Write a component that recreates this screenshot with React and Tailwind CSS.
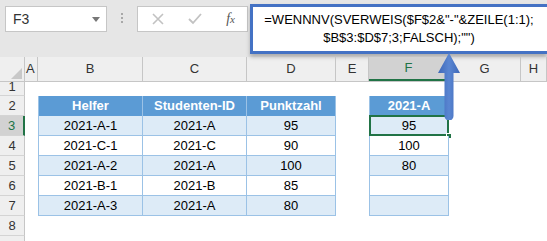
import React from 'react'

const cols = [
  { key: 'A', w: 'w-[13px]' },
  { key: 'B', w: 'w-[105px]' },
  { key: 'C', w: 'w-[104px]' },
  { key: 'D', w: 'w-[89px]' },
  { key: 'E', w: 'w-[33px]' },
  { key: 'F', w: 'w-[80px]' },
  { key: 'G', w: 'w-[72px]' },
  { key: 'H', w: 'flex-1' },
]

const rows = [
  { n: 3, b: '2021-A-1', c: '2021-A', d: '95', f: '95' },
  { n: 4, b: '2021-C-1', c: '2021-C', d: '90', f: '100' },
  { n: 5, b: '2021-A-2', c: '2021-A', d: '100', f: '80' },
  { n: 6, b: '2021-B-1', c: '2021-B', d: '85', f: '' },
  { n: 7, b: '2021-A-3', c: '2021-A', d: '80', f: '' },
]

const RowHead = ({ n, active, h = 'h-[20px]' }) => (
  <div
    className={`w-[25px] shrink-0 ${h} flex items-center justify-center border-b border-[#d4d4d4] text-[13px] ${
      active ? 'bg-[#d2d2d2] text-[#217346] border-r-2 border-r-[#217346]' : 'bg-[#efefef] text-[#333] border-r border-r-[#c6c6c6]'
    }`}
  >
    {n}
  </div>
)

const App = () => {
  return (
    <div className="relative w-[547px] h-[241px] overflow-hidden bg-white" style={{ fontFamily: '"Liberation Sans", Arial, sans-serif' }}>
      {/* formula bar */}
      <div className="h-[57px] bg-[#e6e6e6] flex items-start">
        <div className="mt-[6px] ml-[5px] w-[102px] h-[26px] bg-white border border-[#c6c6c6] flex items-center justify-between pl-[7px] pr-[6px]">
          <span className="text-[14px] text-[#333]">F3</span>
          <svg width="8" height="5" viewBox="0 0 8 5"><path d="M0 0h8L4 5z" fill="#777" /></svg>
        </div>
        <div className="w-[30px] mt-[13px] flex flex-col items-center gap-[2px]">
          <div className="w-[2px] h-[2px] bg-[#a8a8a8]" />
          <div className="w-[2px] h-[2px] bg-[#a8a8a8]" />
          <div className="w-[2px] h-[2px] bg-[#a8a8a8]" />
        </div>
        <div className="mt-[6px] w-[111px] h-[26px] bg-white border border-[#c6c6c6] flex items-center pl-[14px] pr-[12px] justify-between">
          <svg width="12" height="12" viewBox="0 0 12 12"><path d="M1 1l10 10M11 1L1 11" stroke="#c2c2c2" strokeWidth="1.6" /></svg>
          <svg width="14" height="12" viewBox="0 0 14 12"><path d="M1 6l4 4 8-9" stroke="#c2c2c2" strokeWidth="1.8" fill="none" /></svg>
          <span className="text-[14px] italic text-[#555] leading-none" style={{ fontFamily: '"Liberation Serif", serif' }}>
            f<span className="text-[11px]">x</span>
          </span>
        </div>
        <div className="ml-[2px] mt-[4px] flex-1 h-[50px] bg-white border-[3px] border-r-0 border-[#4472c4] shadow-[0_3px_4px_rgba(0,0,0,0.25)] flex flex-col items-center justify-center text-[13px] leading-[18px] text-black whitespace-nowrap pr-[2px]">
          <div>=WENNNV(SVERWEIS($F$2&"-"&ZEILE(1:1);</div>
          <div>$B$3:$D$7;3;FALSCH);"")</div>
        </div>
      </div>

      {/* column headers */}
      <div className="flex h-[25px] bg-[#efefef] border-b border-[#c6c6c6]">
        <div className="w-[25px] shrink-0 flex items-end justify-end border-r border-[#c6c6c6] pr-[2px] pb-[2px]">
          <svg width="11" height="11" viewBox="0 0 11 11"><path d="M11 0v11H0z" fill="#c8c8c8" /></svg>
        </div>
        {cols.map((c) => (
          <div
            key={c.key}
            className={`${c.w} shrink-0 flex items-center justify-center text-[13px] ${
              c.key === 'F'
                ? 'bg-[#d2d2d2] text-[#217346] border-b-2 border-[#217346] border-r border-r-[#c6c6c6]'
                : 'text-[#333] border-r border-[#c6c6c6]'
            } ${c.key === 'A' ? 'justify-start pl-[1px]' : ''}`}
          >
            {c.key}
          </div>
        ))}
      </div>

      {/* row 1 */}
      <div className="flex">
        <RowHead n={1} h="h-[14px] leading-[10px] items-start" />
      </div>

      {/* row 2: headers */}
      <div className="flex text-[13px]">
        <RowHead n={2} />
        <div className="w-[13px] shrink-0" />
        <div className="w-[105px] shrink-0 h-[20px] bg-[#5b9bd5] text-white font-bold flex items-center justify-center border-l border-r border-[#9bc2e6]">Helfer</div>
        <div className="w-[104px] shrink-0 h-[20px] bg-[#5b9bd5] text-white font-bold flex items-center justify-center border-r border-[#9bc2e6]">Studenten-ID</div>
        <div className="w-[89px] shrink-0 h-[20px] bg-[#5b9bd5] text-white font-bold flex items-center justify-center border-r border-[#9bc2e6]">Punktzahl</div>
        <div className="w-[33px] shrink-0" />
        <div className="w-[80px] shrink-0 h-[20px] bg-[#5b9bd5] text-white font-bold flex items-center justify-center border-l border-r border-[#9bc2e6]">2021-A</div>
      </div>

      {/* data rows */}
      {rows.map((r, i) => {
        const fill = i % 2 === 0 ? 'bg-[#ddebf7]' : 'bg-white'
        return (
          <div key={r.n} className="flex text-[13px] text-black">
            <RowHead n={r.n} active={r.n === 3} />
            <div className="w-[13px] shrink-0" />
            <div className={`w-[105px] shrink-0 h-[20px] ${fill} flex items-center justify-center border-l border-r border-b border-[#9bc2e6]`}>{r.b}</div>
            <div className={`w-[104px] shrink-0 h-[20px] ${fill} flex items-center justify-center border-r border-b border-[#9bc2e6]`}>{r.c}</div>
            <div className={`w-[89px] shrink-0 h-[20px] ${fill} flex items-center justify-center border-r border-b border-[#9bc2e6]`}>{r.d}</div>
            <div className="w-[33px] shrink-0" />
            <div className={`relative w-[80px] shrink-0 h-[20px] ${fill} flex items-center justify-center border-l border-r border-b border-[#9bc2e6]`}>
              {r.f}
              {r.n === 3 && (
                <>
                  <div className="absolute -left-[1px] -top-[1px] -right-[1px] -bottom-[1px] border-2 border-[#217346]" />
                  <div className="absolute -right-[4px] -bottom-[4px] w-[6px] h-[6px] bg-[#217346] border border-white" />
                </>
              )}
            </div>
          </div>
        )
      })}

      {/* rows 8, 9 */}
      <div className="flex"><RowHead n={8} /></div>
      <div className="flex"><RowHead n="" /></div>

      {/* callout arrow */}
      <svg className="absolute left-[436px] top-[52px]" width="26" height="68" viewBox="0 0 26 68">
        <defs>
          <linearGradient id="arw" x1="0" x2="1" y1="0" y2="0">
            <stop offset="0" stopColor="#3e68b8" />
            <stop offset="0.5" stopColor="#5a86d2" />
            <stop offset="1" stopColor="#3e68b8" />
          </linearGradient>
        </defs>
        <path d="M13 1L2 21h6.5v43a4.5 4.5 0 0 0 9 0V21H24z" fill="url(#arw)" />
      </svg>
    </div>
  )
}

export default App
